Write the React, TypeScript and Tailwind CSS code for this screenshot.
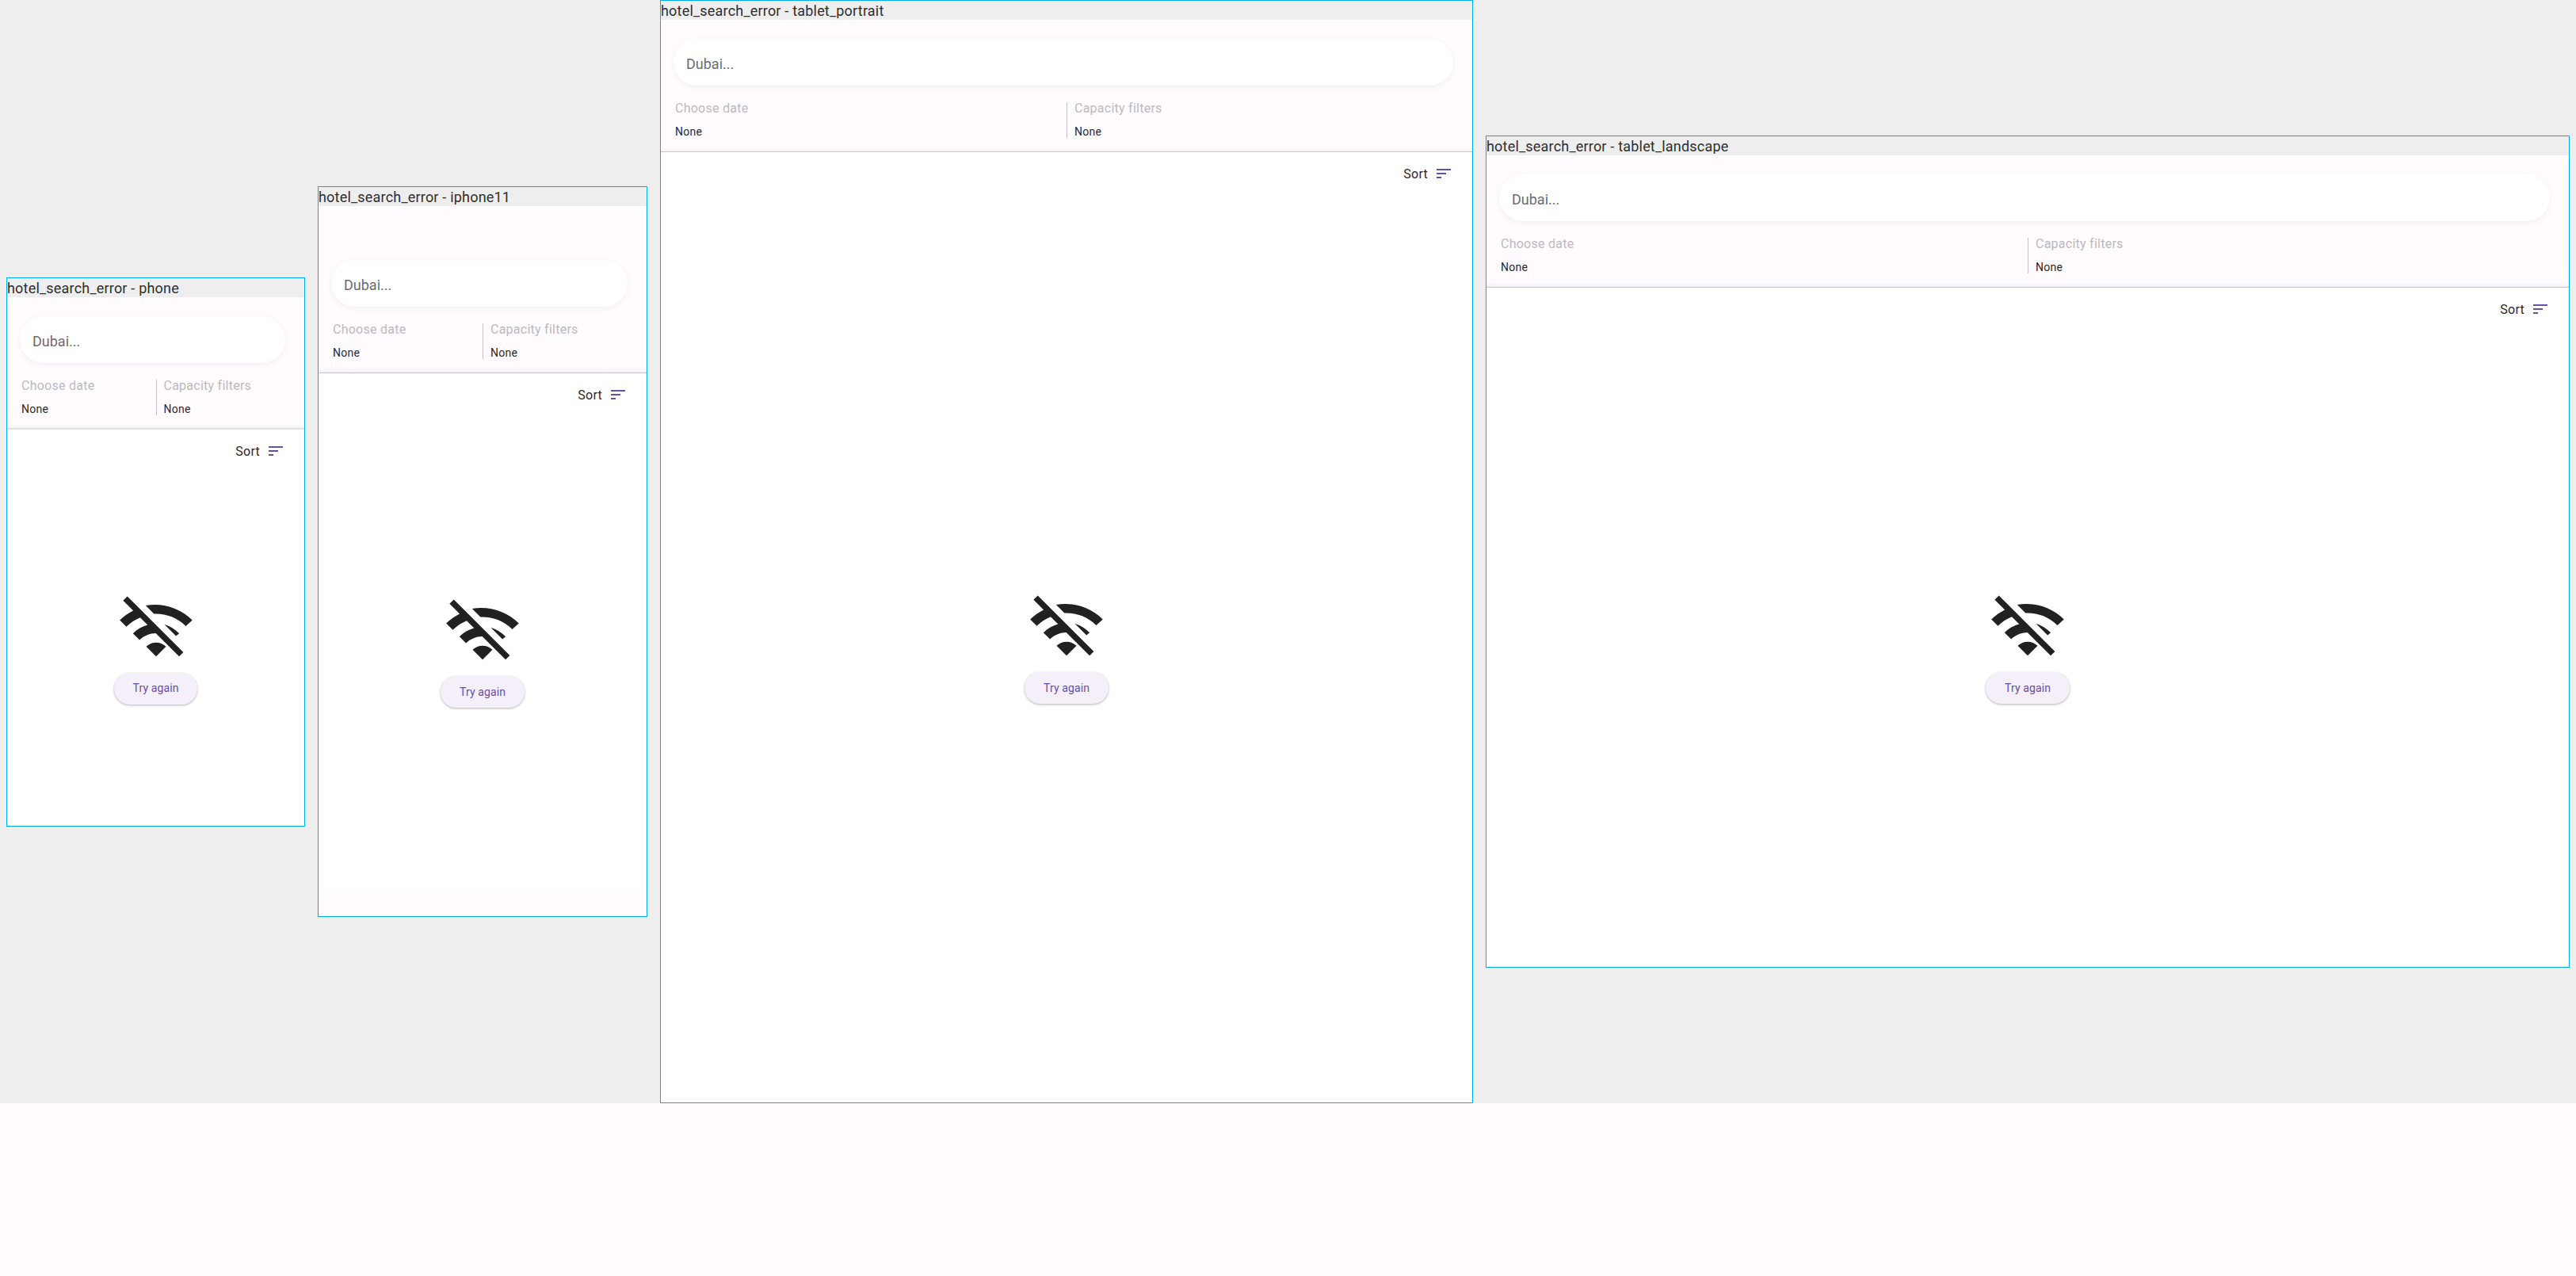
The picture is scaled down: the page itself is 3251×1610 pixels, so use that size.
const roboto = 'font-[Roboto,sans-serif]';

function SortIcon() {
  return (
    <svg className="w-6 h-6 fill-[#6750a4]" viewBox="0 0 24 24">
      <path d="M3 18h6v-2H3v2zM3 6v2h18V6H3zm0 7h12v-2H3v2z" />
    </svg>
  );
}

function WifiOffIcon() {
  return (
    <svg className="w-[100px] h-[100px] fill-[#212121]" viewBox="0 0 24 24">
      <path d="M22.99 9C19.15 5.16 13.8 3.68 8.84 4.56l2.52 2.52c3.47-.17 6.99 1.05 9.63 3.7l2-1.78zm-4 4c-1.29-1.29-2.84-2.2-4.49-2.73l3.53 3.53.96-.8zM2 3.05L5.07 6.1C3.6 6.82 2.22 7.78 1 9l1.99 2c1.24-1.24 2.67-2.16 4.2-2.77l2.24 2.24C7.81 10.89 6.27 11.73 5 13v.01L6.99 15c1.36-1.36 3.14-2.04 4.92-2.06L18.98 20l1.27-1.26L3.29 1.79 2 3.05zM9 17l3 3 3-3c-1.65-1.66-4.34-1.66-6 0z" />
    </svg>
  );
}

function FilterColumn({ label, className }: { label: string; className: string }) {
  return (
    <div className={`h-full ${className}`}>
      <div className="text-[16px] leading-[16px] tracking-[0.25px] text-[#bdb9be] whitespace-nowrap">{label}</div>
      <div className="mt-[13px] text-[14px] leading-[16px] tracking-[0.25px] text-[#2a282d]">None</div>
    </div>
  );
}

type FrameProps = {
  title: string;
  className: string;
  topInset?: string;
  lineClass?: string;
  safeBottom?: boolean;
};

function Frame({ title, className, topInset = 'pt-6', lineClass = 'h-px bg-[#cac4d0]', safeBottom }: FrameProps) {
  return (
    <div className={`absolute flex flex-col border border-[#00aeef] bg-white ${className}`}>
      {/* Title bar, descenders get clipped in the reference */}
      <div className="h-6 shrink-0 bg-[#eeeeee]">
        <div className="h-[22px] overflow-hidden text-[18px] leading-[25px] tracking-[0.2px] text-[#2e2e2e] whitespace-nowrap">
          {title}
        </div>
      </div>

      {/* Search header */}
      <div className={`shrink-0 bg-[#fffbff] ${topInset}`}>
        <div className="ml-4 mr-6 h-[59px] rounded-full bg-white pl-4 pt-[4px] flex items-center shadow-[0_2px_8px_rgba(0,0,0,0.06)]">
          <span className="text-[18px] text-[#6f6b70]">Dubai...</span>
        </div>
        <div className="mt-[21px] h-[42px] grid grid-cols-2">
          <FilterColumn label="Choose date" className="pl-[18px]" />
          <FilterColumn label="Capacity filters" className="pl-[9px] border-l border-[#c4c0c4]" />
        </div>
        <div className="h-5 bg-gradient-to-b from-[#fffbff] from-70% to-[#f4f1f5]" />
      </div>
      <div className={`shrink-0 ${lineClass}`} />

      {/* Sort */}
      <div className="h-[47px] shrink-0 pt-[15px] pr-6 flex justify-end items-start gap-2">
        <span className="mt-px text-[16px] leading-6 tracking-[0.25px] text-[#2a282d]">Sort</span>
        <SortIcon />
      </div>

      {/* Error state */}
      <div className="flex-1 pt-[2px] flex flex-col items-center justify-center">
        <WifiOffIcon />
        <button className="mt-[4px] h-10 px-6 rounded-full bg-[#f4eff8] text-[14px] tracking-[0.1px] text-[#6750a4] shadow-[0_1px_3px_rgba(0,0,0,0.3)]">
          Try again
        </button>
      </div>
      {safeBottom && <div className="h-[34px] shrink-0 bg-[#fffbff]" />}
    </div>
  );
}

export default function App() {
  return (
    <div className={`relative w-[3251px] h-[1610px] overflow-hidden bg-[#fffbff] ${roboto}`}>
      <div className="relative h-[1392px] bg-[#eeeeee]">
        <Frame
          title="hotel_search_error - phone"
          className="left-[8px] top-[350px] w-[377px] h-[693px]"
          lineClass="h-[2px] -mt-px bg-[#e2dfe5]"
        />
        <Frame
          title="hotel_search_error - iphone11"
          className="left-[401px] top-[235px] w-[416px] h-[922px]"
          topInset="pt-[68px]"
          safeBottom
        />
        <Frame
          title="hotel_search_error - tablet_portrait"
          className="left-[833px] top-0 w-[1026px] h-[1392px]"
        />
        <Frame
          title="hotel_search_error - tablet_landscape"
          className="left-[1875px] top-[171px] w-[1368px] h-[1050px]"
        />
      </div>
    </div>
  );
}
